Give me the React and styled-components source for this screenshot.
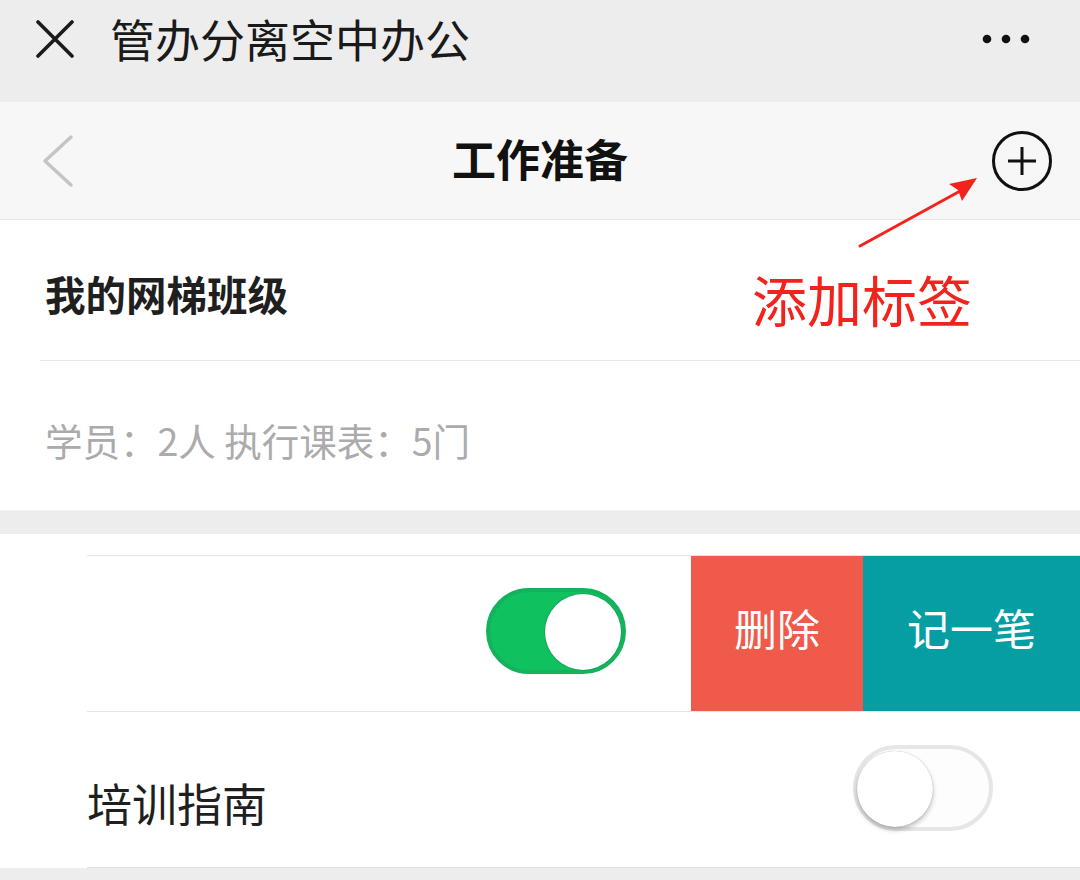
import React from "react";
import styled, { createGlobalStyle } from "styled-components";

const Global = createGlobalStyle`
  html, body { margin: 0; padding: 0; }
  body {
    width: 1080px;
    height: 880px;
    overflow: hidden;
    background: #ededed;
    font-family: "Noto Sans CJK SC", "Noto Sans", sans-serif;
  }
`;

const Page = styled.div`
  position: relative;
  width: 1080px;
  height: 880px;
  background: #ededed;
  overflow: hidden;
`;

const TopBar = styled.header`
  height: 102px;
  box-sizing: border-box;
  padding: 0 50px 24px 36px;
  display: flex;
  align-items: center;
  background: #ededed;
`;

const TopTitle = styled.h1`
  margin: -2px 0 0 36px;
  flex: 1;
  font-size: 45px;
  font-weight: 400;
  line-height: 1;
  color: #1a1a1a;
`;

const NavBar = styled.nav`
  height: 118px;
  box-sizing: border-box;
  display: grid;
  grid-template-columns: 1fr auto 1fr;
  align-items: center;
  padding: 0 26px;
  background: #f7f7f7;
  border-bottom: 1px solid #e6e6e6;
`;

const NavTitle = styled.div`
  font-size: 44px;
  font-weight: 700;
  color: #111;
  line-height: 1;
  margin-top: -6px;
`;

const NavSide = styled.div`
  display: flex;
  justify-content: ${(p) => (p.$end ? "flex-end" : "flex-start")};
  align-items: center;
  padding-left: ${(p) => (p.$end ? 0 : 14)}px;
`;

const Card = styled.section`
  background: #fff;
  margin-bottom: ${(p) => p.$gap || 0}px;
`;

const CardTitle = styled.div`
  height: 141px;
  display: flex;
  align-items: center;
  padding: 6px 0 0 5px;
  margin-left: 40px;
  box-sizing: border-box;
  font-size: 40.5px;
  font-weight: 700;
  color: #1f1f1f;
  border-bottom: 1px solid #e8e8e8;
`;

const CardMeta = styled.div`
  height: 150px;
  display: flex;
  align-items: center;
  padding: 8px 0 0 45px;
  box-sizing: border-box;
  font-size: 37.5px;
  color: #ababab;
  border-bottom: 1px solid #f2f2f2;
`;

const List = styled.section`
  background: #fff;
  padding: 21px 0 0 87px;
`;

const Row = styled.div`
  height: 155px;
  display: flex;
  align-items: stretch;
  border-top: 1px solid #e6e6e6;
  border-bottom: ${(p) => (p.$last ? "1px solid #e0e0e0" : "none")};
`;

const RowMain = styled.div`
  flex: 1;
  display: flex;
  align-items: center;
  justify-content: space-between;
  padding-right: ${(p) => p.$pr}px;
`;

const RowLabel = styled.span`
  font-size: 45px;
  color: #1f1f1f;
  padding-top: 26px;
`;

const ActionButton = styled.button`
  width: ${(p) => p.$w}px;
  border: 0;
  margin: 0;
  padding: 0 0 14px;
  background: ${(p) => p.$bg};
  color: #fff;
  font-family: inherit;
  font-size: 43px;
  display: flex;
  align-items: center;
  justify-content: center;
`;

const Switch = styled.div`
  position: relative;
  width: 140px;
  height: 86px;
  box-sizing: border-box;
  border-radius: 43px;
  background: ${(p) => (p.$on ? "#0fc15f" : "#fdfdfd")};
  border: 4px solid ${(p) => (p.$on ? "#15b25d" : "#e6e6e6")};
  margin-top: ${(p) => p.$mt || 0}px;
`;

const Knob = styled.div`
  position: absolute;
  top: 2px;
  ${(p) => (p.$on ? "right: 1px;" : "left: 0px;")}
  width: 76px;
  height: 76px;
  border-radius: 50%;
  background: #fff;
  box-shadow: ${(p) =>
    p.$on ? "0 0 0 1px #17a75a" : "0 3px 5px rgba(0,0,0,0.25), 0 0 1px rgba(0,0,0,0.3)"};
`;

const Note = styled.div`
  position: absolute;
  left: 752px;
  top: 271px;
  font-size: 55px;
  line-height: 1;
  color: #f2231c;
`;

const ArrowSvg = styled.svg`
  position: absolute;
  left: 850px;
  top: 168px;
`;

const CloseIcon = () => (
  <svg width="38" height="38" viewBox="0 0 38 38">
    <path d="M2 2 L36 36 M36 2 L2 36" stroke="#1a1a1a" strokeWidth="3.6" strokeLinecap="round" />
  </svg>
);

const Dots = () => (
  <svg width="48" height="10" viewBox="0 0 48 10">
    <circle cx="5" cy="5" r="4.3" fill="#111" />
    <circle cx="24" cy="5" r="4.3" fill="#111" />
    <circle cx="43" cy="5" r="4.3" fill="#111" />
  </svg>
);

const BackIcon = () => (
  <svg width="34" height="54" viewBox="0 0 34 54">
    <path d="M31 3 L5 27 L31 51" stroke="#c4c4c4" strokeWidth="3.4" fill="none" strokeLinecap="round" strokeLinejoin="round" />
  </svg>
);

const PlusCircle = () => (
  <svg width="64" height="64" viewBox="0 0 64 64">
    <circle cx="32" cy="32" r="28.5" stroke="#111" strokeWidth="3" fill="none" />
    <path d="M32 18 V46 M18 32 H46" stroke="#111" strokeWidth="3" />
  </svg>
);

export default function App() {
  return (
    <Page>
      <Global />
      <TopBar>
        <CloseIcon />
        <TopTitle>管办分离空中办公</TopTitle>
        <Dots />
      </TopBar>
      <NavBar>
        <NavSide>
          <BackIcon />
        </NavSide>
        <NavTitle>工作准备</NavTitle>
        <NavSide $end>
          <PlusCircle />
        </NavSide>
      </NavBar>
      <Card $gap={23}>
        <CardTitle>我的网梯班级</CardTitle>
        <CardMeta>学员：2人 执行课表：5门</CardMeta>
      </Card>
      <List>
        <Row>
          <RowMain $pr={65}>
            <span />
            <Switch $on $mt={-6}>
              <Knob $on />
            </Switch>
          </RowMain>
          <ActionButton $w={172} $bg="#f05a4b">删除</ActionButton>
          <ActionButton $w={217} $bg="#069ea2">记一笔</ActionButton>
        </Row>
        <Row $last>
          <RowMain $pr={87}>
            <RowLabel>培训指南</RowLabel>
            <Switch $mt={-4}>
              <Knob />
            </Switch>
          </RowMain>
        </Row>
      </List>
      <ArrowSvg width="140" height="90" viewBox="0 0 140 90">
        <path d="M10 78 L112 22" stroke="#f2231c" strokeWidth="3" strokeLinecap="round" />
        <path d="M127 10 L99 16 L108 22 L112 33 Z" fill="#f2231c" />
      </ArrowSvg>
      <Note>添加标签</Note>
    </Page>
  );
}
